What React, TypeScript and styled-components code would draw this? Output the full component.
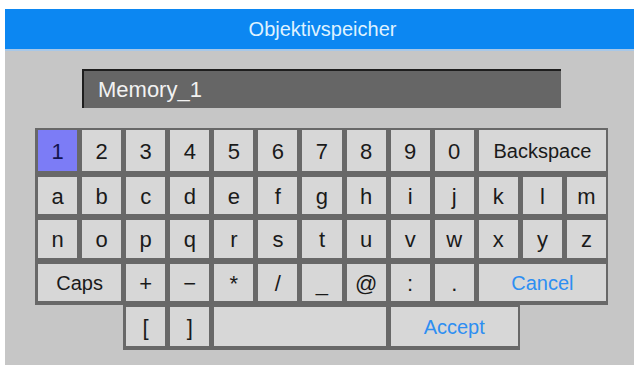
import styled, { createGlobalStyle } from "styled-components"

const GlobalStyle = createGlobalStyle`
  html, body {
    margin: 0;
    padding: 0;
    background: #ffffff;
  }
  body {
    font-family: "Liberation Sans", Arial, sans-serif;
  }
`

const Screen = styled.div`
  width: 639px;
  height: 368px;
  padding: 9px 5px 3px 5px;
  box-sizing: border-box;
`

const Panel = styled.div`
  width: 629px;
  height: 356px;
  background: #c6c6c6;
  display: flex;
  flex-direction: column;
`

const Header = styled.div`
  height: 40px;
  background: #0c87f2;
  border-bottom: 2px solid #a8c8e8;
  color: #dff2ff;
  font-size: 20px;
  display: flex;
  align-items: center;
  justify-content: center;
  padding-left: 6px;
`

const Body = styled.div`
  display: flex;
  flex-direction: column;
  padding: 18px 0 0 30px;
`

const Input = styled.div`
  width: 463px;
  height: 37px;
  margin-left: 47px;
  background: #666666;
  border-top: 2px solid #1e1e1e;
  border-left: 2px solid #1e1e1e;
  color: #f2f2f2;
  font-size: 22px;
  display: flex;
  align-items: center;
  padding-left: 14px;
  box-sizing: content-box;
`

const Keyboard = styled.div`
  margin-top: 20px;
  width: 573px;
  display: grid;
  grid-template-columns: repeat(13, 1fr);
  grid-template-rows: 47px 43px 44px 43px 45px;
`

interface KeyProps {
  $span?: number;
  $start?: number;
  $active?: boolean;
  $accent?: boolean;
}

const Key = styled.div<KeyProps>`
  grid-column: ${(p) => (p.$start ? `${p.$start} / span ${p.$span ?? 1}` : `span ${p.$span ?? 1}`)};
  background: ${(p) => (p.$active ? "#7c7cf6" : "#d7d7d7")};
  border: 2px solid #686868;
  border-left-width: 3px;
  border-bottom-width: 4px;
  color: ${(p) => (p.$accent ? "#2d8ef2" : p.$active ? "#141450" : "#1a1a1a")};
  font-size: ${(p) => ((p.$span ?? 1) > 1 ? "20px" : "22px")};
  display: flex;
  align-items: center;
  justify-content: center;
  padding-top: 2px;
  box-sizing: border-box;
`

const row1 = ["1", "2", "3", "4", "5", "6", "7", "8", "9", "0"]
const row2 = ["a", "b", "c", "d", "e", "f", "g", "h", "i", "j", "k", "l", "m"]
const row3 = ["n", "o", "p", "q", "r", "s", "t", "u", "v", "w", "x", "y", "z"]
const row4 = ["+", "−", "*", "/", "_", "@", ":", "."]

export default function App() {
  return (
    <>
      <GlobalStyle />
      <Screen>
        <Panel>
          <Header>Objektivspeicher</Header>
          <Body>
            <Input>Memory_1</Input>
            <Keyboard>
              {row1.map((k, i) => (
                <Key key={k} $active={i === 0}>{k}</Key>
              ))}
              <Key $span={3}>Backspace</Key>
              {row2.map((k) => (
                <Key key={k}>{k}</Key>
              ))}
              {row3.map((k) => (
                <Key key={k}>{k}</Key>
              ))}
              <Key $span={2}>Caps</Key>
              {row4.map((k) => (
                <Key key={k}>{k}</Key>
              ))}
              <Key $span={3} $accent>Cancel</Key>
              <Key $start={3}>[</Key>
              <Key>]</Key>
              <Key $span={4}></Key>
              <Key $span={3} $accent>Accept</Key>
            </Keyboard>
          </Body>
        </Panel>
      </Screen>
    </>
  )
}
